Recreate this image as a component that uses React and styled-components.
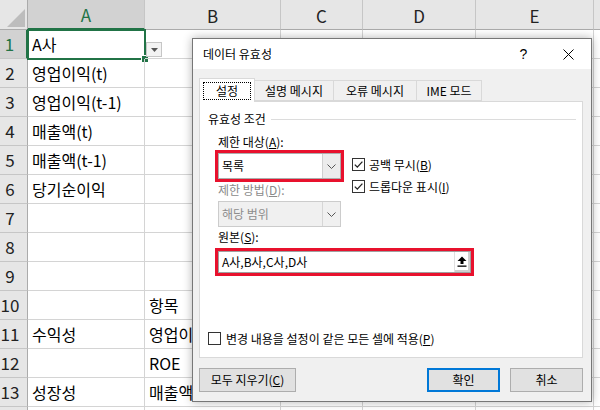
import React from "react";
import styled, { createGlobalStyle } from "styled-components";

const FONT = `"Noto Sans CJK KR", "Noto Sans", sans-serif`;

const GlobalStyle = createGlobalStyle`
  html, body { margin: 0; padding: 0; background: #fff; }
  body { font-family: ${FONT}; }
`;

const Screen = styled.div`
  position: relative;
  width: 600px;
  height: 410px;
  overflow: hidden;
  background: #fff;
`;

/* ---------- spreadsheet ---------- */
const Sheet = styled.div`
  display: grid;
  grid-template-columns: 28px 117px 136px 82px 113px 118px 40px;
  grid-template-rows: 30px repeat(14, 29px);
  font-family: ${FONT};
`;

const Corner = styled.div`
  box-sizing: border-box;
  background: #e6e6e6;
  border-right: 1px solid #ababab;
  border-bottom: 1px solid #ababab;
  position: relative;
  svg { position: absolute; left: 0; top: 0; }
`;

const ColHeader = styled.div`
  box-sizing: border-box;
  background: ${(p) => (p.$sel ? "#d2d2d2" : "#e6e6e6")};
  border-right: 1px solid #c6c6c6;
  border-bottom: ${(p) => (p.$sel ? "2px solid #217346" : "1px solid #ababab")};
  display: flex;
  align-items: center;
  justify-content: center;
  font-size: 17px;
  line-height: 20px;
  padding-top: 2px;
  color: ${(p) => (p.$sel ? "#217346" : "#222")};
`;

const RowHeader = styled.div`
  box-sizing: border-box;
  background: ${(p) => (p.$sel ? "#d2d2d2" : "#e6e6e6")};
  border-right: ${(p) => (p.$sel ? "2px solid #217346" : "1px solid #ababab")};
  border-bottom: 1px solid #c6c6c6;
  display: flex;
  align-items: center;
  justify-content: center;
  padding-right: 7px;
  font-size: 17px;
  line-height: 20px;
  color: ${(p) => (p.$sel ? "#217346" : "#222")};
`;

const Cell = styled.div`
  box-sizing: border-box;
  position: relative;
  border-right: 1px solid #d4d4d4;
  border-bottom: 1px solid #d4d4d4;
  display: flex;
  align-items: center;
  padding-left: 4px;
  font-size: 16px;
  line-height: 20px;
  color: #000;
  white-space: nowrap;
`;

const Selection = styled.div`
  position: absolute;
  left: -1px;
  top: -1px;
  right: -2px;
  bottom: -2px;
  border: 2px solid #217346;
  pointer-events: none;
`;

const FillHandle = styled.div`
  position: absolute;
  right: -5px;
  bottom: -5px;
  width: 6px;
  height: 6px;
  background: #217346;
  border: 1px solid #fff;
`;

const CellDrop = styled.div`
  position: absolute;
  left: calc(100% + 2px);
  top: 12px;
  width: 16px;
  height: 15px;
  box-sizing: border-box;
  border: 1px solid #c6c6c6;
  background: #f3f3f3;
  display: flex;
  align-items: center;
  justify-content: center;
`;

/* ---------- dialog ---------- */
const Dialog = styled.div`
  position: absolute;
  left: 192px;
  top: 38px;
  width: 400px;
  height: 364px;
  box-sizing: border-box;
  border: 1px solid #777;
  background: #f0f0f0;
  box-shadow: 0 0 9px rgba(0, 0, 0, 0.3);
  display: flex;
  flex-direction: column;
  font-family: ${FONT};
  font-size: 12px;
  line-height: 16px;
  color: #000;
`;

const TitleBar = styled.div`
  height: 30px;
  flex-shrink: 0;
  background: #fff;
  display: flex;
  align-items: center;
`;

const Title = styled.div`
  flex: 1;
  padding-left: 10px;
  padding-bottom: 1px;
`;

const TitleButton = styled.div`
  width: 45px;
  height: 30px;
  display: flex;
  align-items: center;
  justify-content: center;
  font-family: "Liberation Sans", "Noto Sans", sans-serif;
  font-size: 14px;
`;

const Body = styled.div`
  flex: 1;
  display: flex;
  flex-direction: column;
  padding: 9px 8px 0 6px;
`;

const TabStrip = styled.div`
  display: flex;
  align-items: flex-start;
  height: 23px;
  position: relative;
  z-index: 1;
`;

const Tab = styled.div`
  box-sizing: border-box;
  width: ${(p) => p.$w}px;
  height: ${(p) => (p.$active ? 24 : 21)}px;
  margin-top: ${(p) => (p.$active ? 0 : 2)}px;
  margin-left: ${(p) => (p.$first ? 0 : -1)}px;
  border: 1px solid #d9d9d9;
  border-bottom: ${(p) => (p.$active ? "none" : "1px solid #d9d9d9")};
  background: ${(p) => (p.$active ? "#fff" : "#f0f0f0")};
  position: relative;
  z-index: ${(p) => (p.$active ? 2 : 1)};
  display: flex;
  align-items: ${(p) => (p.$active ? "stretch" : "center")};
  justify-content: center;
  padding: ${(p) => (p.$active ? "3px 3px 2px" : "0")};
`;

const FocusRect = styled.span`
  flex: 1;
  border: 1px dotted #000;
  display: flex;
  align-items: center;
  justify-content: center;
`;

const Panel = styled.div`
  box-sizing: border-box;
  height: 257px;
  border: 1px solid #d9d9d9;
  background: #fff;
  display: flex;
  flex-direction: column;
  padding: 0 6px 12px 8px;
`;

const GroupHeader = styled.div`
  display: flex;
  align-items: center;
  gap: 5px;
  margin-top: 9px;
  height: 16px;
`;

const GroupLine = styled.div`
  flex: 1;
  height: 1px;
  background: #dcdcdc;
`;

const Content = styled.div`
  display: flex;
  flex-direction: column;
  padding-left: 10px;
  margin-top: 7px;
`;

const TopRow = styled.div`
  display: flex;
`;

const LeftCol = styled.div`
  width: 123px;
  display: flex;
  flex-direction: column;
`;

const RightCol = styled.div`
  margin-left: 11px;
  padding-top: 24px;
  display: flex;
  flex-direction: column;
  gap: 9px;
`;

const Label = styled.div`
  height: 16px;
  white-space: nowrap;
  color: ${(p) => (p.$disabled ? "#8a8a8a" : "#000")};
  margin-top: ${(p) => p.$mt || 0}px;
`;

const U = styled.span`
  text-decoration: underline;
  text-underline-offset: 1px;
`;

const Highlight = styled.div`
  box-sizing: border-box;
  width: ${(p) => p.$w}px;
  margin: ${(p) => p.$mt || 0}px -3px 0 -3px;
  border: 3px solid #e8112d;
  display: flex;
`;

const Combo = styled.div`
  box-sizing: border-box;
  width: 123px;
  height: 26px;
  margin-top: ${(p) => p.$mt || 0}px;
  border: 1px solid ${(p) => (p.$disabled ? "#cccccc" : "#adadad")};
  background: ${(p) => (p.$disabled ? "#f0f0f0" : "#fff")};
  display: flex;
  color: ${(p) => (p.$disabled ? "#8d8d8d" : "#000")};
`;

const ComboText = styled.div`
  flex: 1;
  display: flex;
  align-items: center;
  padding-left: 3px;
`;

const ComboButton = styled.div`
  width: 17px;
  border-left: 1px solid ${(p) => (p.$disabled ? "#d6d6d6" : "#d0d0d0")};
  background: ${(p) => (p.$disabled ? "#f0f0f0" : "#ececec")};
  display: flex;
  align-items: center;
  justify-content: center;
`;

const CheckRow = styled.div`
  display: flex;
  align-items: center;
  gap: ${(p) => p.$gap || 4}px;
  height: 13px;
  white-space: nowrap;
`;

const Box = styled.div`
  box-sizing: border-box;
  width: 13px;
  height: 13px;
  border: 1px solid #333;
  background: #fff;
  flex-shrink: 0;
  svg { display: block; }
`;

const SourceInput = styled.div`
  flex: 1;
  height: 22px;
  box-sizing: border-box;
  border: 1px solid #a0a0a0;
  display: flex;
  background: #fff;
`;

const SourceText = styled.div`
  flex: 1;
  display: flex;
  align-items: center;
  padding-left: 3px;
`;

const PickButton = styled.div`
  width: 16px;
  background: #fff;
  border-left: 1px solid #e0e0e0;
  box-shadow: inset -2px -2px 0 #cfcfcf;
  display: flex;
  align-items: center;
  justify-content: center;
  padding: 0 2px 2px 0;
  box-sizing: border-box;
`;

const BottomCheck = styled.div`
  margin-top: auto;
`;

const Footer = styled.div`
  display: flex;
  margin-top: 10px;
  height: 24px;
`;

const Button = styled.div`
  box-sizing: border-box;
  width: ${(p) => p.$w}px;
  height: 24px;
  margin-left: ${(p) => p.$ml || "0"};
  background: #e1e1e1;
  border: ${(p) => (p.$primary ? "2px solid #0078d7" : "1px solid #adadad")};
  display: flex;
  align-items: center;
  justify-content: center;
  white-space: nowrap;
`;

const Chevron = () => (
  <svg width="9" height="5" viewBox="0 0 9 5">
    <polyline points="0.5,0.5 4.5,4.5 8.5,0.5" fill="none" stroke="#555" strokeWidth="1" />
  </svg>
);

const Check = () => (
  <svg width="11" height="11" viewBox="0 0 11 11">
    <polyline points="1.8,5.6 4.3,8.1 9.4,2.6" fill="none" stroke="#222" strokeWidth="1.3" />
  </svg>
);

const rows = [
  ["A사", ""],
  ["영업이익(t)", ""],
  ["영업이익(t-1)", ""],
  ["매출액(t)", ""],
  ["매출액(t-1)", ""],
  ["당기순이익", ""],
  ["", ""],
  ["", ""],
  ["", ""],
  ["", "항목"],
  ["수익성", "영업이익률"],
  ["", "ROE"],
  ["성장성", "매출액증가율"],
  ["", ""],
];

const cols = ["A", "B", "C", "D", "E", ""];

export default function App() {
  return (
    <>
      <GlobalStyle />
      <Screen>
        <Sheet>
          <Corner>
            <svg width="28" height="30" viewBox="0 0 28 30">
              <polygon points="7,27 25,27 25,9" fill="#bdbdbd" />
            </svg>
          </Corner>
          {cols.map((c, i) => (
            <ColHeader key={i} $sel={c === "A"}>
              {c}
            </ColHeader>
          ))}
          {rows.map((r, i) => (
            <React.Fragment key={i}>
              <RowHeader $sel={i === 0}>{i < 13 ? i + 1 : ""}</RowHeader>
              <Cell>
                {r[0]}
                {i === 0 && (
                  <>
                    <Selection />
                    <FillHandle />
                    <CellDrop>
                      <svg width="7" height="4" viewBox="0 0 7 4">
                        <polygon points="0,0 7,0 3.5,4" fill="#555" />
                      </svg>
                    </CellDrop>
                  </>
                )}
              </Cell>
              <Cell>{r[1]}</Cell>
              <Cell />
              <Cell />
              <Cell />
              <Cell />
            </React.Fragment>
          ))}
        </Sheet>

        <Dialog>
          <TitleBar>
            <Title>데이터 유효성</Title>
            <TitleButton>?</TitleButton>
            <TitleButton>
              <svg width="11" height="11" viewBox="0 0 11 11">
                <path d="M0.5 0.5 L10.5 10.5 M10.5 0.5 L0.5 10.5" stroke="#000" strokeWidth="1" />
              </svg>
            </TitleButton>
          </TitleBar>
          <Body>
            <TabStrip>
              <Tab $active $first $w={56}>
                <FocusRect>설정</FocusRect>
              </Tab>
              <Tab $w={80}>설명 메시지</Tab>
              <Tab $w={84}>오류 메시지</Tab>
              <Tab $w={66}>IME 모드</Tab>
            </TabStrip>
            <Panel>
              <GroupHeader>
                <span>유효성 조건</span>
                <GroupLine />
              </GroupHeader>
              <Content>
                <TopRow>
                  <LeftCol>
                    <Label>
                      제한 대상(<U>A</U>):
                    </Label>
                    <Highlight $w={129}>
                      <Combo>
                        <ComboText>목록</ComboText>
                        <ComboButton>
                          <Chevron />
                        </ComboButton>
                      </Combo>
                    </Highlight>
                    <Label $disabled>
                      제한 방법(<U>D</U>):
                    </Label>
                    <Combo $disabled $mt={3}>
                      <ComboText>해당 범위</ComboText>
                      <ComboButton $disabled>
                        <Chevron />
                      </ComboButton>
                    </Combo>
                  </LeftCol>
                  <RightCol>
                    <CheckRow>
                      <Box>
                        <Check />
                      </Box>
                      <span>
                        공백 무시(<U>B</U>)
                      </span>
                    </CheckRow>
                    <CheckRow>
                      <Box>
                        <Check />
                      </Box>
                      <span>
                        드롭다운 표시(<U>I</U>)
                      </span>
                    </CheckRow>
                  </RightCol>
                </TopRow>
                <Label $mt={2}>
                  원본(<U>S</U>):
                </Label>
                <Highlight $w={259} $mt={3}>
                  <SourceInput>
                    <SourceText>A사,B사,C사,D사</SourceText>
                    <PickButton>
                      <svg width="10" height="11" viewBox="0 0 10 11">
                        <polygon points="5,0.5 9.5,5 6.5,5 6.5,8 3.5,8 3.5,5 0.5,5" fill="#000" />
                        <rect x="0.5" y="9.5" width="9" height="1.3" fill="#000" />
                      </svg>
                    </PickButton>
                  </SourceInput>
                </Highlight>
              </Content>
              <BottomCheck>
                <CheckRow $gap={5}>
                  <Box />
                  <span>
                    변경 내용을 설정이 같은 모든 셀에 적용(<U>P</U>)
                  </span>
                </CheckRow>
              </BottomCheck>
            </Panel>
            <Footer>
              <Button $w={97}>
                <span>
                  모두 지우기(<U>C</U>)
                </span>
              </Button>
              <Button $w={73} $ml="auto" $primary>
                확인
              </Button>
              <Button $w={73} $ml="10px">
                취소
              </Button>
            </Footer>
          </Body>
        </Dialog>
      </Screen>
    </>
  );
}
